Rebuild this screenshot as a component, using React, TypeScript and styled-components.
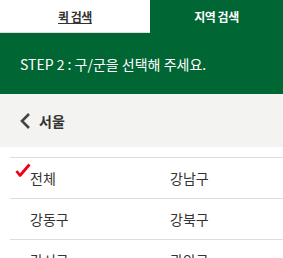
import React from 'react'
import styled, { createGlobalStyle } from 'styled-components'

const GlobalStyle = createGlobalStyle`
  body {
    margin: 0;
    background: #fff;
    font-family: 'Noto Sans CJK KR', 'Noto Sans', sans-serif;
  }
`

const districts = ['전체', '강남구', '강동구', '강북구', '강서구', '관악구']

const Tabs = styled.div`
  display: flex;
  height: 33px;
`

const Tab = styled.div<{ $active?: boolean }>`
  flex: 0 0 ${(p) => (p.$active ? '133px' : '150px')};
  display: flex;
  align-items: center;
  justify-content: center;
  font-size: 12px;
  font-weight: 700;
  letter-spacing: -0.5px;
  background: ${(p) => (p.$active ? '#006633' : '#fff')};
  color: ${(p) => (p.$active ? '#fff' : '#333')};
  text-decoration: ${(p) => (p.$active ? 'none' : 'underline')};
  box-sizing: border-box;
  border-bottom: ${(p) => (p.$active ? 'none' : '1px solid #ddd')};
`

const Step = styled.div`
  height: 61px;
  background: #006633;
  color: #fff;
  font-size: 14px;
  display: flex;
  align-items: center;
  padding-left: 20px;
  letter-spacing: 0;
`

const Header = styled.div`
  height: 53px;
  background: #f3f3f1;
  display: flex;
  align-items: center;
  padding-left: 19px;
  gap: 8px;
  font-size: 14px;
  font-weight: 700;
  color: #333;
`

const List = styled.div`
  margin: 10px 0 0 10px;
  display: grid;
  grid-template-columns: 140px 1fr;
  border-top: 1px solid #ddd;
`

const Item = styled.div`
  position: relative;
  height: 40px;
  border-bottom: 1px solid #ddd;
  display: flex;
  align-items: center;
  padding-left: 20px;
  font-size: 14px;
  color: #333;
`

const Check = styled.svg`
  position: absolute;
  left: 5px;
  top: 5px;
`

const Back = () => (
  <svg width="12" height="18" viewBox="0 0 12 18">
    <path d="M10 2 L3 9 L10 16" fill="none" stroke="#444" strokeWidth="2.6" />
  </svg>
)

const App: React.FC = () => (
  <>
    <GlobalStyle />
    <Tabs>
      <Tab>퀵 검색</Tab>
      <Tab $active>지역 검색</Tab>
    </Tabs>
    <Step>STEP 2 : 구/군을 선택해 주세요.</Step>
    <Header>
      <Back />
      서울
    </Header>
    <List>
      {districts.map((d, i) => (
        <Item key={d}>
          {i === 0 && (
            <Check width="16" height="14" viewBox="0 0 16 14">
              <path d="M1.5 8 L5 12.5 L14.5 1.5" fill="none" stroke="#f00018" strokeWidth="2.8" strokeLinejoin="round" />
            </Check>
          )}
          {d}
        </Item>
      ))}
    </List>
  </>
)

export default App
